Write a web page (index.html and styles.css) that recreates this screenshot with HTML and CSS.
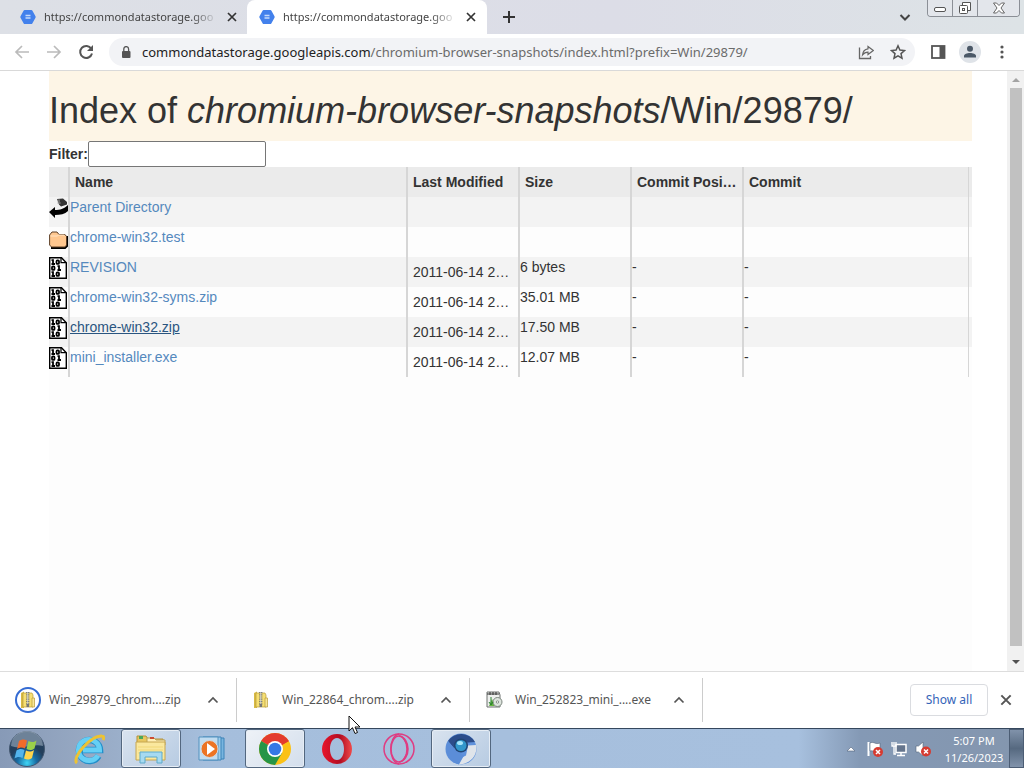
FILE: index.html
```html
<!DOCTYPE html>
<html lang="en">
<head>
<meta charset="utf-8">
<title>Index of chromium-browser-snapshots/Win/29879/</title>
<link rel="stylesheet" href="styles.css">
</head>
<body>
<svg class="defs" width="0" height="0" aria-hidden="true">
  <symbol id="favicon" viewBox="0 0 16 16"><path d="M4.600 1h6.800a1 1 0 0 1 .9.5l3.200 5.800a1.400 1.400 0 0 1 0 1.400l-3.200 5.800a1 1 0 0 1-.9.5H4.600a1 1 0 0 1-.9-.5L.5 8.700a1.400 1.400 0 0 1 0-1.400l3.200-5.800a1 1 0 0 1 .9-.5z" fill="#4381ec"/><path d="M5.500 6.500h5M5.500 9h5" stroke="#c5dafb" stroke-width="1.500"/></symbol>
  <symbol id="close" viewBox="0 0 12 12"><path d="M2 2l8 8M10 2l-8 8" stroke="currentColor" stroke-width="1.700" fill="none"/></symbol>
  <symbol id="up" viewBox="0 0 12 12"><path d="M1.500 8.500L6 4l4.500 4.500" stroke="currentColor" stroke-width="1.700" fill="none"/></symbol>
  <symbol id="binary" viewBox="0 0 18 22"><path d="M.7.7h11.800l4.800 5V21.300H.7z" fill="#fff" stroke="#000" stroke-width="1.400"/><path d="M12 .7v5h5.300" fill="none" stroke="#000" stroke-width="1.200"/><g fill="none" stroke="#000" stroke-width="1.800"><path d="M2.500 3.200h1.500V7M2.500 7h3.500M2.500 15.200h1.500V19M2.500 19h3.500M8.500 9.200h1.500V13M8.500 13h3.500"/><rect x="7.500" y="3.400" width="2.500" height="3.500" rx="1"/><rect x="3" y="9.400" width="2.500" height="3.500" rx="1"/><rect x="7.500" y="15.400" width="2.500" height="3.500" rx="1"/></g></symbol>
  <symbol id="folder" viewBox="0 0 20 18"><path d="M2 17h14l2-2V5" fill="none" stroke="#000" stroke-width="2"/><path d="M.6 4L3 1h5l2 2.500h6l1.500 2V14l-1.500 2H2.500L.6 14z" fill="#ffc78f" stroke="#5d3f27"/><path d="M1.500 5h7l1-1h6" stroke="#ffe5c6" fill="none"/></symbol>
  <symbol id="parent" viewBox="0 0 20 20"><path d="M0 14l6-5v3c5 0 9-1 13-5v6c-3 3-8 4-13 4v3z" fill="#000"/><path d="M8 1l6-.5 4 3.500v2.500l-6 2-2-2z" fill="#333"/><path d="M8 3h3M8 5h4M10 1v5" stroke="#aaa" stroke-width=".6"/></symbol>
  <symbol id="zip" viewBox="0 0 18 18"><path d="M2 2l3-1.500V17H2z" fill="#d8ba45"/><path d="M4 2h9l1 2v12H4z" fill="#f6df72" stroke="#b99b37" stroke-width=".7"/><path d="M13 7h2.500v9H13z" fill="#f8e795" stroke="#b99b37" stroke-width=".7"/><path d="M8.800 1v13" stroke="#555a60" stroke-width="3" stroke-dasharray="1 .8"/><path d="M8.800 1v14" stroke="#d9dcdf" stroke-width="1"/><path d="M7.500 13h2.600v3H7.500z" fill="#777"/></symbol>
</svg>

<header class="tabstrip">
  <nav class="tabs" aria-label="Tabs">
    <div class="tab"><svg class="i16"><use href="#favicon"/></svg><span class="tab-title">https://commondatastorage.goo</span><button class="plain" aria-label="Close tab"><svg class="i12"><use href="#close"/></svg></button></div>
    <div class="tab active"><svg class="i16"><use href="#favicon"/></svg><span class="tab-title">https://commondatastorage.goo</span><button class="plain" aria-label="Close tab"><svg class="i12"><use href="#close"/></svg></button></div>
    <button class="plain new-tab" aria-label="New tab"><svg class="i12" viewBox="0 0 12 12"><path d="M6 0v12M0 6h12" stroke="#333" stroke-width="2"/></svg></button>
  </nav>
  <button class="plain tab-search" aria-label="Search tabs"><svg class="i12" viewBox="0 0 12 12"><path d="M1.500 4L6 8.500 10.500 4" stroke="#444" stroke-width="2" fill="none"/></svg></button>
  <div class="window-controls">
    <button aria-label="Minimize"><svg class="minimize" width="12" height="6" viewBox="0 0 12 6"><rect x=".5" y=".5" width="11" height="4" rx="1.500" fill="#fff" stroke="#555"/></svg></button>
    <button aria-label="Restore"><svg width="14" height="14" viewBox="0 0 14 14"><path d="M4.500 4V1.500h8v8H10" fill="#fff" stroke="#555"/><rect x="1.500" y="4.500" width="8" height="8" rx="1" fill="#fff" stroke="#555"/><rect x="4.500" y="7.500" width="2" height="2" fill="none" stroke="#555"/></svg></button>
    <button class="wide" aria-label="Close"><svg width="12" height="12" viewBox="0 0 12 12"><path d="M.5 1h3L6 3.500 8.500 1h3L8 6l3.500 5h-3L6 8.500 3.500 11h-3L4 6z" fill="#fff" stroke="#666"/></svg></button>
  </div>
</header>

<div class="toolbar">
  <button class="plain tool" aria-label="Back"><svg class="i16" viewBox="0 0 16 16"><path d="M15 8H2M8 2L2 8l6 6" fill="none" stroke="#bbb" stroke-width="1.700"/></svg></button>
  <button class="plain tool" aria-label="Forward"><svg class="i16" viewBox="0 0 16 16"><path d="M1 8h13M8 2l6 6-6 6" fill="none" stroke="#bbb" stroke-width="1.700"/></svg></button>
  <button class="plain tool" aria-label="Reload"><svg class="i16" viewBox="0 0 16 16"><path d="M13.300 4.800A6 6 0 1 0 14 9.500" fill="none" stroke="#555" stroke-width="2"/><path d="M15 1v6H9z" fill="#555"/></svg></button>
  <div class="omnibox">
    <svg class="lock" width="10" height="13" viewBox="0 0 10 13"><rect x="1" y="5" width="8.500" height="7" rx="1" fill="#555"/><path d="M2.800 5V3a2.400 2.400 0 0 1 4.800 0v2" fill="none" stroke="#555" stroke-width="1.300"/></svg>
    <span class="url">commondatastorage.googleapis.com<span class="path">/chromium-browser-snapshots/index.html?prefix=Win/29879/</span></span>
    <button class="plain tool" aria-label="Share"><svg class="i16" viewBox="0 0 16 16"><path d="M1.500 3.500v11h11V12" fill="none" stroke="#666" stroke-width="1.300"/><path d="M10 2.500L15.300 6.500 10 10.500V8.200C7.500 8.200 6 9 4.500 11c.3-3.300 2-5.700 5.500-6.200z" fill="none" stroke="#666" stroke-width="1.200"/></svg></button>
    <button class="plain tool" aria-label="Bookmark"><svg class="i16" viewBox="0 0 16 16"><path d="M8 1.800l1.900 4.200 4.600.5L11 9.600l1 4.600-4-2.400-4 2.400 1-4.600L1.500 6.500 6.100 6z" fill="none" stroke="#555" stroke-width="1.500"/></svg></button>
  </div>
  <button class="plain tool side" aria-label="Side panel"><svg class="i16" viewBox="0 0 16 16"><rect x="2" y="2" width="12.500" height="12" fill="#fff" stroke="#555" stroke-width="1.800"/><path d="M9.500 2h5v12h-5z" fill="#555"/></svg></button>
  <button class="plain tool" aria-label="Profile"><svg width="22" height="22" viewBox="0 0 22 22"><circle cx="11" cy="11" r="11" fill="#dfe3e8"/><circle cx="11" cy="7.800" r="3" fill="#4b5867"/><path d="M5 16.500v-1.500c0-2 3-3 6-3s6 1 6 3v1.500z" fill="#4b5867"/></svg></button>
  <button class="plain tool" aria-label="Menu"><svg class="i16" viewBox="0 0 16 16" fill="#555"><circle cx="8" cy="3" r="1.600"/><circle cx="8" cy="8" r="1.600"/><circle cx="8" cy="13" r="1.600"/></svg></button>
</div>

<div class="viewport">
  <main class="page">
    <h1>Index of <em>chromium-browser-snapshots</em>/Win/29879/</h1>
    <div class="filter"><label for="filter">Filter:</label><input id="filter" type="text"></div>
    <div class="listing">
      <table>
        <colgroup><col class="c-icon"><col><col class="c-mid"><col class="c-mid"><col class="c-mid"><col class="c-last"></colgroup>
        <thead><tr><th></th><th>Name</th><th>Last Modified</th><th>Size</th><th>Commit Posi…</th><th>Commit</th></tr></thead>
        <tbody>
          <tr><td><svg class="parent"><use href="#parent"/></svg></td><td><a href="#">Parent Directory</a></td><td></td><td></td><td></td><td></td></tr>
          <tr><td><svg class="folder"><use href="#folder"/></svg></td><td><a href="#">chrome-win32.test</a></td><td></td><td></td><td></td><td></td></tr>
          <tr><td><svg class="binary"><use href="#binary"/></svg></td><td><a href="#">REVISION</a></td><td class="date">2011-06-14 2…</td><td>6 bytes</td><td>-</td><td>-</td></tr>
          <tr><td><svg class="binary"><use href="#binary"/></svg></td><td><a href="#">chrome-win32-syms.zip</a></td><td class="date">2011-06-14 2…</td><td>35.01 MB</td><td>-</td><td>-</td></tr>
          <tr><td><svg class="binary"><use href="#binary"/></svg></td><td><a class="hover" href="#">chrome-win32.zip</a></td><td class="date">2011-06-14 2…</td><td>17.50 MB</td><td>-</td><td>-</td></tr>
          <tr><td><svg class="binary"><use href="#binary"/></svg></td><td><a href="#">mini_installer.exe</a></td><td class="date">2011-06-14 2…</td><td>12.07 MB</td><td>-</td><td>-</td></tr>
        </tbody>
      </table>
    </div>
  </main>
  <div class="scrollbar">
    <svg width="17" height="17" viewBox="0 0 17 17"><path d="M5 11h8L9 7z" fill="#a3a3a3"/></svg>
    <div class="thumb"></div>
    <svg class="down" width="17" height="17" viewBox="0 0 17 17"><path d="M5 6h8l-4 4z" fill="#505050"/></svg>
  </div>
</div>

<section class="shelf" aria-label="Downloads">
  <div class="download"><span class="badge ring"><svg class="i18"><use href="#zip"/></svg></span><span class="file">Win_29879_chrom....zip</span><button class="plain" aria-label="Options"><svg class="i12"><use href="#up"/></svg></button></div>
  <div class="download"><span class="badge"><svg class="i18"><use href="#zip"/></svg></span><span class="file">Win_22864_chrom....zip</span><button class="plain" aria-label="Options"><svg class="i12"><use href="#up"/></svg></button></div>
  <div class="download"><span class="badge"><svg class="i18" viewBox="0 0 18 18"><path d="M2 1h12l1 3v12H2z" fill="#eef0ee" stroke="#6d716f"/><path d="M2 3h12M5 1v3M8 1v3M11 1v3" stroke="#333"/><path d="M4 15l3-7 3 7z" fill="#65b43f"/><circle cx="12.500" cy="11" r="4.500" fill="#dde4dd" stroke="#7b857e"/><circle cx="12.500" cy="11" r="1.200" fill="#fff" stroke="#89918b"/><path d="M6 6v7M4 11l2 3 2-3" stroke="#27802f" fill="none"/></svg></span><span class="file">Win_252823_mini_....exe</span><button class="plain" aria-label="Options"><svg class="i12"><use href="#up"/></svg></button></div>
  <button class="show-all">Show all</button>
  <button class="plain shelf-close" aria-label="Close downloads"><svg class="i14"><use href="#close"/></svg></button>
</section>

<footer class="taskbar">
  <button class="plain start" aria-label="Start"><svg width="38" height="38" viewBox="0 0 38 38"><defs><radialGradient id="orb" cy=".9"><stop offset="0" stop-color="#3fd5f5"/><stop offset=".55" stop-color="#176ba3"/><stop offset="1" stop-color="#233f5c"/></radialGradient></defs><circle cx="19" cy="19" r="17.500" fill="url(#orb)" stroke="#42566f"/><path d="M3 16a16 15 0 0 1 32 0c-9-3-22 4-32 0z" fill="#dce9f2" opacity=".4"/><path d="M11 11c3-2 5-2 8-.5l-2 8c-3-1.500-5-1.500-8 .5z" fill="#f36b29"/><path d="M20.500 11c3 1.500 5 1.500 8-.5l-2 8c-3 2-5 2-8 .5z" fill="#9bd04a"/><path d="M8.500 20.500c3-2 5-2 8-.5l-2 8c-3-1.500-5-1.500-8 .5z" fill="#53b4ec"/><path d="M18 20.500c3 1.500 5 1.500 8-.5l-2 8c-3 2-5 2-8 .5z" fill="#ffd44c"/></svg></button>
  <button class="task" aria-label="Internet Explorer"><svg class="i32" viewBox="0 0 32 32"><path d="M25.500 23A10.500 10.500 0 1 1 27 17H9" fill="none" stroke="#238fca" stroke-width="6.500"/><path d="M25 22.500A10.500 10.500 0 1 1 26.500 17H10" fill="none" stroke="#65cff5" stroke-width="5"/><path d="M4 30C-2 25 18 2 29 3c2 0 2 2 1 4" fill="none" stroke="#edc333" stroke-width="3"/></svg></button>
  <button class="task open" aria-label="Explorer"><svg class="i32" viewBox="0 0 32 32"><path d="M2 3h9l2 3h15v20H2z" fill="#e8c760" stroke="#b5923c"/><path d="M4 3h4v3H4z" fill="#49a85a"/><path d="M12 5h7l2 2h9v5H12z" fill="#fff0b8" stroke="#bba157"/><path d="M15 4h4v2h-4z" fill="#cc4b32"/><path d="M1 9h29v18H1z" fill="#fae89e" stroke="#c6a650"/><path d="M3 14h25M3 17h25M3 20h25" stroke="#f0d779"/><path d="M5 30V19h22v11h-5v-6H10v6z" fill="#a6daf1" stroke="#5caacb"/></svg></button>
  <button class="task" aria-label="Media Player"><svg class="i32" viewBox="0 0 32 32"><path d="M10 5h17v21H10z" fill="#78b5df" stroke="#3d83b8"/><path d="M6 4h18v23H6z" fill="#9acbea" stroke="#3d83b8"/><path d="M2 4h19v23H2z" fill="#c1dcf0" stroke="#5292bf"/><circle cx="12.500" cy="16" r="8.500" fill="#ec7424" stroke="#d4d9de"/><path d="M10 10l8 6-8 6z" fill="#fff"/></svg></button>
  <button class="task open bright" aria-label="Chrome"><svg class="i32" viewBox="0 0 32 32"><circle cx="16" cy="16" r="16" fill="#fbc116"/><path d="M16 16L2.150 8A16 16 0 0 1 29.850 8z" fill="#e33b2e"/><path d="M2.150 8A16 16 0 0 0 16 32l7-12-7-4z" fill="#269547"/><path d="M16 8h13.850L16 16z" fill="#e33b2e"/><circle cx="16" cy="16" r="8" fill="#fff"/><circle cx="16" cy="16" r="6.300" fill="#3578e5"/></svg></button>
  <button class="task" aria-label="Opera"><svg class="i32" viewBox="0 0 32 32"><defs><linearGradient id="op"><stop offset="0" stop-color="#e8152b"/><stop offset=".6" stop-color="#b20d22"/><stop offset="1" stop-color="#f04a4a"/></linearGradient></defs><path fill="url(#op)" fill-rule="evenodd" d="M16 1a15 15 0 1 0 0 30 15 15 0 0 0 0-30zm0 4c4.500 0 7 5 7 11s-2.500 11-7 11-7-5-7-11 2.500-11 7-11z"/></svg></button>
  <button class="task" aria-label="Opera GX"><svg class="i32" viewBox="0 0 32 32" fill="none" stroke="#df3c82" stroke-width="1.500"><circle cx="16" cy="16" r="15"/><ellipse cx="16" cy="16" rx="8" ry="13"/><path d="M16 1C5 3 5 29 16 31M16 3c12 2 12 24 0 26M20 5c6 7 6 15 0 22"/></svg></button>
  <button class="task open" aria-label="Chromium"><svg class="i32" viewBox="0 0 32 32"><circle cx="16" cy="16" r="15.500" fill="#6092dc"/><path d="M3 8A16 16 0 0 1 30 9l-13 1-8 5z" fill="#2c4d8b"/><path d="M31 12c2 10-5 19-17 19.500l-1-5 8-4 2-10z" fill="#dfe4ea"/><path d="M3 8C-2 18 3 28 14 31.500l5-9-9-6z" fill="#5b8dd8"/><circle cx="16" cy="12.500" r="7" fill="#214674"/><circle cx="16" cy="12.500" r="5.500" fill="#3297cb"/><ellipse cx="15" cy="10" rx="3" ry="2" fill="#a6e4fa"/></svg></button>
  <div class="tray">
    <button class="plain" aria-label="Hidden icons"><svg class="i16" viewBox="0 0 16 16"><path d="M4 10h8L8 6z" fill="#fff" stroke="#52627b" stroke-width=".6"/></svg></button>
    <button class="plain" aria-label="Action Center"><svg class="i16" viewBox="0 0 16 16"><path d="M1.500 1v14" stroke="#fff" stroke-width="2"/><path d="M3 2c4-2 5 2 10 0v8c-5 2-6-1-10 0z" fill="#fff" stroke="#56647a" stroke-width=".6"/><circle cx="11" cy="11" r="5" fill="#d63b31"/><path d="M9 9l4 4M13 9l-4 4" stroke="#fff" stroke-width="1.500"/></svg></button>
    <button class="plain" aria-label="Network"><svg class="i16" viewBox="0 0 16 16"><path d="M5 3.500h10v8H5z" fill="#65758d" stroke="#fff" stroke-width="1.500"/><path d="M10 12v2M6 14.500h8" stroke="#fff" stroke-width="1.500"/><path d="M1 1v4h4V1M3 5v8h2M3 1v3" fill="none" stroke="#fff" stroke-width="1.300"/></svg></button>
    <button class="plain" aria-label="Volume"><svg class="i16" viewBox="0 0 16 16"><path d="M1 5h2.500L8 1v14l-4.500-4H1z" fill="#fff" stroke="#56647a" stroke-width=".6"/><circle cx="11" cy="10.500" r="5" fill="#d63b31"/><path d="M9 8.500l4 4M13 8.500l-4 4" stroke="#fff" stroke-width="1.500"/></svg></button>
    <div class="clock"><time>5:07 PM</time><time>11/26/2023</time></div>
    <button class="desktop" aria-label="Show desktop"></button>
  </div>
</footer>
<svg class="cursor" width="13" height="20" viewBox="0 0 13 20"><path d="M1 1v15l3.500-3.300L7 18.500l2.500-1L7 12h5z" fill="#fff" stroke="#111"/></svg>
</body>
</html>
```
FILE: styles.css
```css
* { box-sizing: border-box; }
body {
  margin: 0; min-height: 100vh; display: flex; flex-direction: column; overflow: hidden;
  font: 14px/20px "Liberation Sans", Arial, sans-serif; color: #333; background: #fff;
}
button { font: inherit; cursor: default; }
svg { display: block; flex: none; }
.defs { position: absolute; }
.i12 { width: 12px; height: 12px; }
.i14 { width: 14px; height: 14px; }
.i16 { width: 16px; height: 16px; }
.i18 { width: 18px; height: 18px; }
.i32 { width: 32px; height: 32px; }
.plain { border: 0; padding: 0; background: none; color: #555; display: flex; align-items: center; justify-content: center; flex: none; }

.tabstrip, .toolbar, .shelf, .taskbar { font-family: "Noto Sans", "Open Sans", sans-serif; font-size: 12px; flex: none; }
.tabstrip { display: flex; height: 34px; background: linear-gradient(90deg, #dde0e6, #dcdde7 60%, #dde3e6); }
.tabs { display: flex; flex: 1; min-width: 0; padding-left: 8px; }
.tab { display: flex; align-items: center; gap: 8px; width: 239px; padding: 0 9px 0 12px; }
.tab.active { width: 240px; padding-right: 10px; background: #fff; border-radius: 8px 8px 0 0; }
.tab-title { flex: 1; min-width: 0; overflow: hidden; white-space: nowrap; font-size: 11px; color: #444; mask-image: linear-gradient(90deg, #000 85%, transparent); }
.tab .plain { color: #333; }
.new-tab { width: 44px; }
.tab-search { width: 44px; }
.window-controls { display: flex; height: 17px; margin-right: 4px; border: 1px solid #8b8f96; border-top: 0; border-radius: 0 0 4px 4px; overflow: hidden; }
.window-controls button { width: 25px; padding: 0; border: 0; border-right: 1px solid #8b8f96; background: #e3e6eb; display: flex; align-items: center; justify-content: center; }
.window-controls .wide { width: 41px; border-right: 0; }
.minimize { margin-top: 4px; }

.toolbar { display: flex; align-items: center; height: 37px; padding: 0 6px; border-bottom: 1px solid #d9d9d9; }
.tool { width: 32px; height: 32px; }
.omnibox { display: flex; align-items: center; flex: 1; min-width: 0; height: 28px; padding: 0 1px 0 12px; margin-left: 7px; border-radius: 14px; background: #f2f3f6; }
.url { flex: 1; margin-left: 11px; overflow: hidden; white-space: nowrap; font-size: 13px; color: #222; }
.path { color: #6b6b6b; }
.side { margin-left: 7px; }

.viewport { display: flex; flex: 1; min-height: 0; }
.page { flex: 1; display: flex; flex-direction: column; min-width: 0; padding: 0 35px 0 49px; }
h1 { margin: 0; padding: 20px 0 10px; background: #fdf5e6; font-size: 36px; line-height: 40px; font-weight: 400; white-space: nowrap; overflow: hidden; }
.filter { display: flex; align-items: center; font-weight: 700; }
.filter input { width: 178px; height: 26px; padding: 1px 2px; border: 1px solid #767676; border-radius: 2px; background: #fff; font: inherit; }
.listing { flex: 1; background: #fdfdfd; }
table { width: 100%; table-layout: fixed; border-collapse: separate; border-spacing: 0; }
.c-icon { width: 21px; }
.c-mid { width: 112px; }
.c-last { width: 228px; }
th, td { height: 30px; padding: 0; border-right: 2px solid #d6d6d6; white-space: nowrap; text-align: left; vertical-align: top; }
th { padding: 5px; background: #ebebeb; }
tbody tr:nth-child(odd) { background: #f3f3f3; }
td:last-child, th:last-child {
  border-right: 0;
  background-image: linear-gradient(#d6d6d6, #d6d6d6);
  background-repeat: no-repeat; background-size: 1px 100%; background-position: right 3px top;
}
td.date { padding: 5px; }
.binary { width: 18px; height: 22px; }
.folder { width: 20px; height: 18px; margin-top: 4px; }
.parent { width: 20px; height: 20px; margin-top: 1px; }
a { color: #5589bd; text-decoration: none; }
a.hover { color: #2a5580; text-decoration: underline; }

.scrollbar { display: flex; flex-direction: column; width: 17px; background: #f1f1f1; }
.thumb { flex: 1; margin: 0 2px 0 3px; background: #c1c1c1; }
.down { margin-top: 8px; }

.shelf { display: flex; align-items: center; height: 57px; padding-left: 4px; border-top: 1px solid #ddd; background: #fff; }
.download { display: flex; align-items: center; width: 233px; height: 44px; padding: 0 17px 0 11px; border-right: 1px solid #ccc; }
.badge { display: flex; align-items: center; justify-content: center; width: 26px; height: 26px; border-radius: 50%; }
.ring { border: 2px solid #346bd3; }
.file { flex: 1; margin-left: 8px; white-space: nowrap; color: #555; }
.show-all { width: 78px; height: 32px; margin-left: auto; border: 1px solid #dadce0; border-radius: 4px; background: #fff; color: #3464b8; }
.shelf-close { width: 36px; }

.taskbar { display: flex; align-items: center; gap: 2px; height: 40px; border-top: 1px solid #35475d; background: linear-gradient(90deg, #879ab7, #96a8c2 8%, #a5bedc 20%, #a7c0de 78%, #8499b5 84%, #8496ae); }
.start { width: 57px; padding-right: 4px; }
.task { display: flex; align-items: center; justify-content: center; width: 60px; height: 39px; padding: 0; border: 1px solid transparent; border-radius: 3px; background: none; }
.open { border-color: #53677f; background: linear-gradient(135deg, #d9e3ef, #b7cbe2); box-shadow: inset 0 0 0 1px #e6edf5; }
.bright { background: linear-gradient(135deg, #eef2f7, #d3deec); }
.tray { display: flex; align-items: center; gap: 8px; margin-left: auto; align-self: stretch; color: #fff; }
.clock { display: flex; flex-direction: column; align-items: center; width: 68px; margin: 0 1px; line-height: 17px; font-size: 11px; }
.desktop { width: 15px; align-self: stretch; margin-left: -8px; padding: 0; border: 1px solid #4c5d74; background: linear-gradient(#8092aa, #566980 50%, #8193ab); }
.cursor { position: fixed; left: 348px; top: 715px; }
```
